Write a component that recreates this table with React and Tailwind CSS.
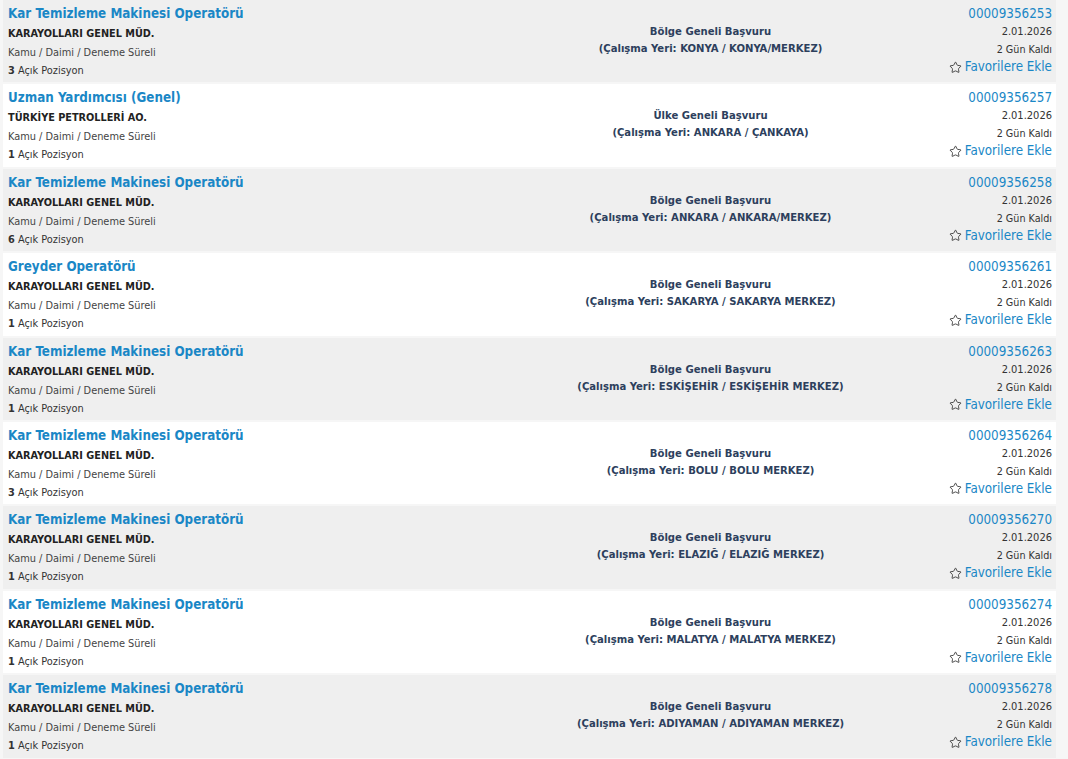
import React from "react";
import { Star } from "lucide-react";

const ilanlar = [
  { baslik: "Kar Temizleme Makinesi Operatörü", kurum: "KARAYOLLARI GENEL MÜD.", adet: 3, tur: "Bölge Geneli Başvuru", yer: "KONYA / KONYA/MERKEZ", no: "00009356253" },
  { baslik: "Uzman Yardımcısı (Genel)", kurum: "TÜRKİYE PETROLLERİ AO.", adet: 1, tur: "Ülke Geneli Başvuru", yer: "ANKARA / ÇANKAYA", no: "00009356257" },
  { baslik: "Kar Temizleme Makinesi Operatörü", kurum: "KARAYOLLARI GENEL MÜD.", adet: 6, tur: "Bölge Geneli Başvuru", yer: "ANKARA / ANKARA/MERKEZ", no: "00009356258" },
  { baslik: "Greyder Operatörü", kurum: "KARAYOLLARI GENEL MÜD.", adet: 1, tur: "Bölge Geneli Başvuru", yer: "SAKARYA / SAKARYA MERKEZ", no: "00009356261" },
  { baslik: "Kar Temizleme Makinesi Operatörü", kurum: "KARAYOLLARI GENEL MÜD.", adet: 1, tur: "Bölge Geneli Başvuru", yer: "ESKİŞEHİR / ESKİŞEHİR MERKEZ", no: "00009356263" },
  { baslik: "Kar Temizleme Makinesi Operatörü", kurum: "KARAYOLLARI GENEL MÜD.", adet: 3, tur: "Bölge Geneli Başvuru", yer: "BOLU / BOLU MERKEZ", no: "00009356264" },
  { baslik: "Kar Temizleme Makinesi Operatörü", kurum: "KARAYOLLARI GENEL MÜD.", adet: 1, tur: "Bölge Geneli Başvuru", yer: "ELAZIĞ / ELAZIĞ MERKEZ", no: "00009356270" },
  { baslik: "Kar Temizleme Makinesi Operatörü", kurum: "KARAYOLLARI GENEL MÜD.", adet: 1, tur: "Bölge Geneli Başvuru", yer: "MALATYA / MALATYA MERKEZ", no: "00009356274" },
  { baslik: "Kar Temizleme Makinesi Operatörü", kurum: "KARAYOLLARI GENEL MÜD.", adet: 1, tur: "Bölge Geneli Başvuru", yer: "ADIYAMAN / ADIYAMAN MERKEZ", no: "00009356278" },
];

const IlanSatiri = ({ ilan, gri }) => (
  <div
    className={`grid grid-cols-[526px_363px_164px] h-[82.4px] mb-[2px] ${gri ? "bg-[#efefef]" : "bg-white"}`}
  >
    {/* Sol */}
    <div className="pl-[5px] pt-[4px]">
      <div className="text-[13.3px] leading-[20px] font-bold text-[#1a87c6]">{ilan.baslik}</div>
      <div className="text-[10.8px] leading-[19px] font-bold text-[#222]">{ilan.kurum}</div>
      <div className="text-[10.9px] leading-[19px] text-[#444]">Kamu / Daimi / Deneme Süreli</div>
      <div className="text-[10.9px] leading-[18px] text-[#333]">
        <span className="font-bold">{ilan.adet}</span> Açık Pozisyon
      </div>
    </div>

    {/* Orta */}
    <div className="pt-[23px] text-center text-[11.2px] leading-[17px] font-bold text-[#2d3f5d]">
      <div>{ilan.tur}</div>
      <div>(Çalışma Yeri: {ilan.yer})</div>
    </div>

    {/* Sağ */}
    <div className="pr-[4px] pt-[5px] text-right">
      <div className="text-[13.3px] leading-[18px] text-[#1a87c6]">{ilan.no}</div>
      <div className="text-[11px] leading-[18px] text-[#333]">2.01.2026</div>
      <div className="text-[10.7px] leading-[17px] text-[#333]">2 Gün Kaldı</div>
      <div className="flex items-center justify-end gap-[3px] text-[13.3px] leading-[18px] text-[#1a87c6]">
        <Star size={13} strokeWidth={1.6} className="text-[#333]" />
        <span>Favorilere Ekle</span>
      </div>
    </div>
  </div>
);

const App = () => {
  return (
    <div
      className="w-[1068px] h-[759px] overflow-hidden bg-[#f6f6f6] pl-[3px]"
      style={{ fontFamily: '"DejaVu Sans Condensed", Tahoma, "Liberation Sans", sans-serif' }}
    >
      <div className="w-[1053px]">
        {ilanlar.map((ilan, i) => (
          <IlanSatiri key={ilan.no} ilan={ilan} gri={i % 2 === 0} />
        ))}
      </div>
    </div>
  );
};

export default App;
